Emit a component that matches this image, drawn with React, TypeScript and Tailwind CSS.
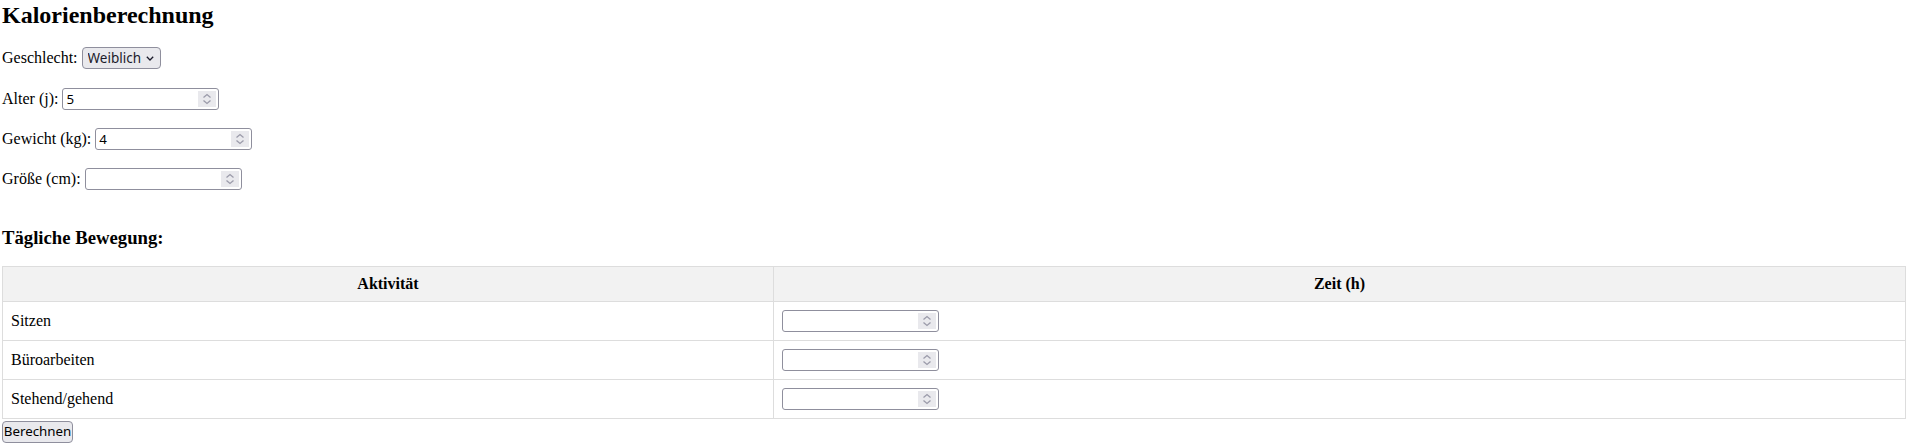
import React from "react";

const serif = "font-['Liberation_Serif','Times_New_Roman',serif]";
const ui = "font-['Noto_Sans','Open_Sans','Liberation_Sans',sans-serif]";

function Spinner() {
  return (
    <span className="pointer-events-none absolute right-[2px] top-[2px] flex h-[16px] w-[18px] items-center justify-center bg-[#e9e9ed]">
      <svg width="18" height="16" viewBox="0 0 18 16" fill="none">
        <polyline points="5.5,6.5 9,3.5 12.5,6.5" stroke="#9b9baa" strokeWidth="1.3" />
        <polyline points="5.5,9.5 9,12.5 12.5,9.5" stroke="#9b9baa" strokeWidth="1.3" />
      </svg>
    </span>
  );
}

function NumberField({ value }: { value?: string }) {
  return (
    <span className="relative inline-flex h-[22px] w-[157px] rounded-[3px] border border-[#8f8f9d] bg-white">
      <input
        type="number"
        defaultValue={value}
        className={`h-full w-full bg-transparent pl-[3px] pr-[22px] text-[13.33px] text-black outline-none [appearance:textfield] [&::-webkit-inner-spin-button]:appearance-none [&::-webkit-outer-spin-button]:appearance-none ${ui}`}
      />
      <Spinner />
    </span>
  );
}

function Row({ label, children, className = "" }: { label: string; children: React.ReactNode; className?: string }) {
  return (
    <div className={`flex h-[22px] items-center gap-[4px] text-[16px] ${className}`}>
      <label>{label}</label>
      {children}
    </div>
  );
}

const activities = ["Sitzen", "Büroarbeiten", "Stehend/gehend"];

export default function App() {
  return (
    <div className={`min-h-[444px] bg-white pl-[2px] text-black ${serif}`}>
      {/* Kopf */}
      <h2 className="pt-[1px] text-[24px] font-bold leading-[28px]">Kalorienberechnung</h2>

      {/* Personendaten */}
      <Row label="Geschlecht:" className="mt-[18px]">
        <span className="relative inline-flex h-[22px] w-[79px] rounded-[4px] border border-[#8f8f9d] bg-[#e9e9ed]">
          <select
            defaultValue="w"
            className={`h-full w-full appearance-none bg-transparent pl-[5px] text-[13.5px] text-[#1b1b2b] outline-none ${ui}`}
          >
            <option value="m">Männlich</option>
            <option value="w">Weiblich</option>
          </select>
          <svg
            className="pointer-events-none absolute right-[6px] top-[8px]"
            width="8"
            height="5"
            viewBox="0 0 8 5"
            fill="none"
          >
            <polyline points="0.8,0.8 4,4 7.2,0.8" stroke="#1b1b2b" strokeWidth="1.3" />
          </svg>
        </span>
      </Row>
      <Row label="Alter (j):" className="mt-[19px]">
        <NumberField value="5" />
      </Row>
      <Row label="Gewicht (kg):" className="mt-[18px]">
        <NumberField value="4" />
      </Row>
      <Row label="Größe (cm):" className="mt-[18px]">
        <NumberField />
      </Row>

      {/* Bewegung */}
      <h3 className="mt-[37px] text-[18.72px] font-bold leading-[22px]">Tägliche Bewegung:</h3>

      <table className="mt-[17px] w-[1904px] border-collapse text-[16px]">
        <thead>
          <tr className="bg-[#f2f2f2]">
            <th className="w-[771px] border border-[#ddd] p-2 text-center font-bold leading-[18px]">Aktivität</th>
            <th className="border border-[#ddd] p-2 text-center font-bold leading-[18px]">Zeit (h)</th>
          </tr>
        </thead>
        <tbody>
          {activities.map((a) => (
            <tr key={a}>
              <td className="border border-[#ddd] px-2 py-2 align-middle leading-[18px]">{a}</td>
              <td className="border border-[#ddd] px-2 py-2 align-middle leading-[0]">
                <NumberField />
              </td>
            </tr>
          ))}
        </tbody>
      </table>

      <button
        className={`h-[22px] w-[71px] rounded-[4px] border border-[#8f8f9d] bg-[#e9e9ed] text-[13.33px] text-black ${ui}`}
      >
        Berechnen
      </button>
    </div>
  );
}
